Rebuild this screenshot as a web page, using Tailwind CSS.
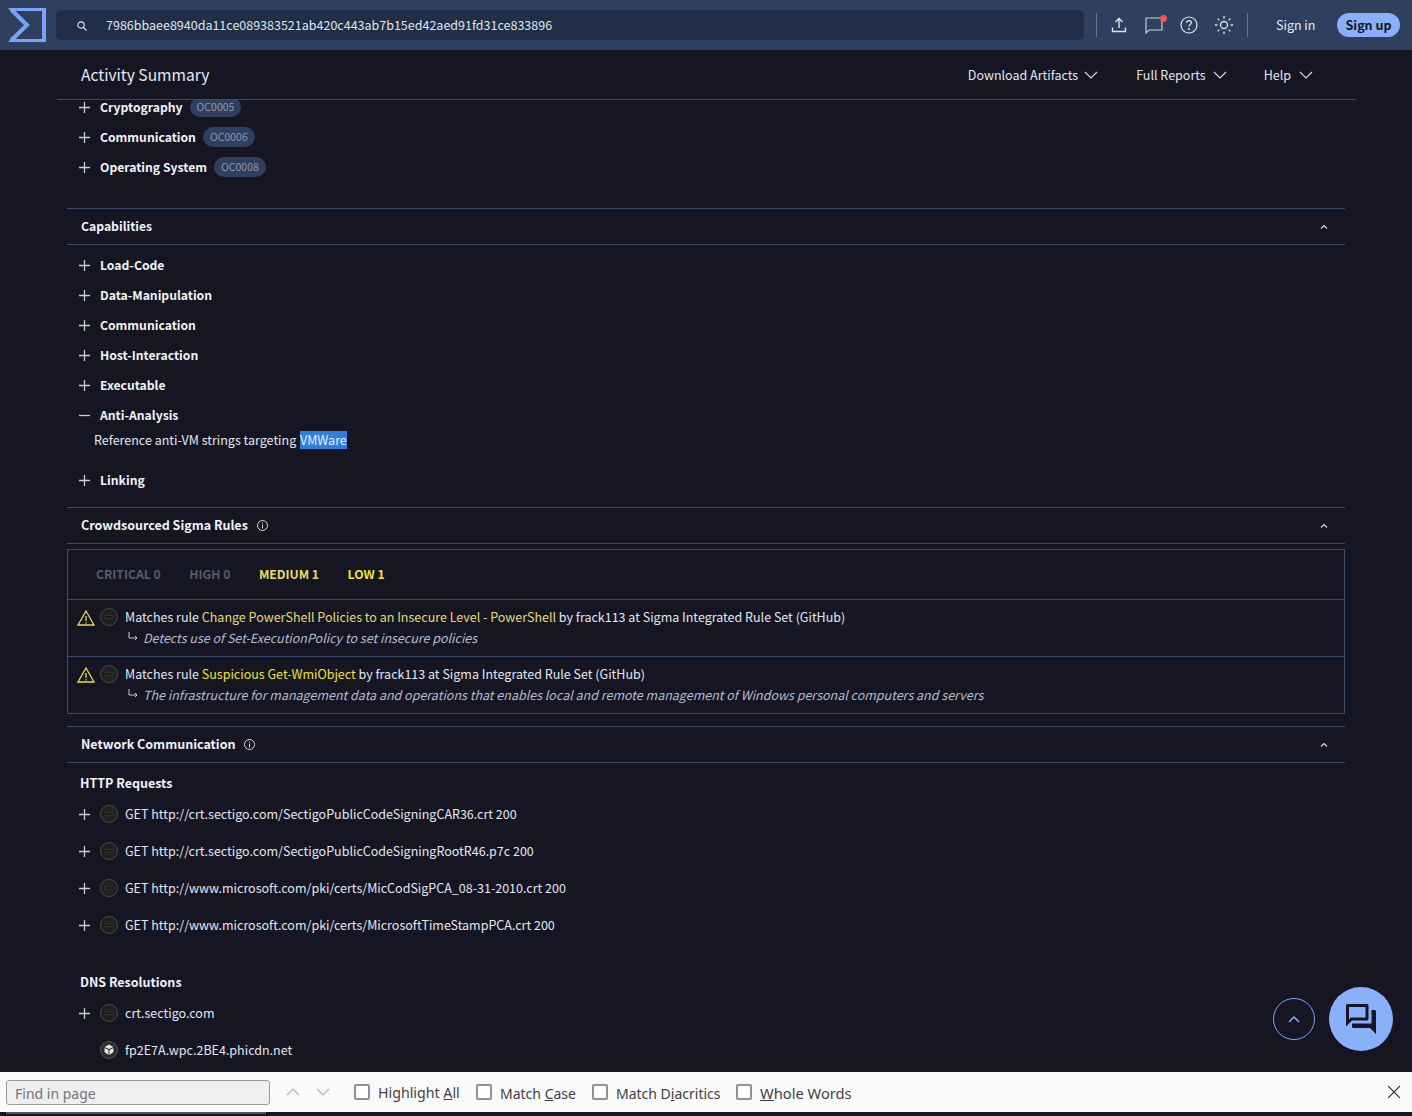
<!DOCTYPE html>
<html lang="en">
<head>
<meta charset="UTF-8">
<title>Activity Summary</title>
<script src="https://cdn.jsdelivr.net/npm/@tailwindcss/browser@4"></script>
</head>
<body class="bg-[#151622]">
<div class="relative w-[1412px] h-[1116px] overflow-hidden flex flex-col font-['Noto_Sans_CJK_JP','Noto_Sans',sans-serif] text-[12.5px] text-[#e3e6ee]">

  <!-- Top bar -->
  <header class="h-[50px] shrink-0 bg-[#2f3f5e] flex items-center">
    <svg class="ml-[8px] shrink-0" width="38" height="34" viewBox="0 0 38 34" fill="none">
      <path d="M36 1.500H3.500L19 17L3.500 32.500H36Z" stroke="#7ba2f7" stroke-width="3"/>
      <path d="M36 0V34" stroke="#7ba2f7" stroke-width="4"/>
      <path d="M3 1.500L19 17L3 32.500" stroke="#7ba2f7" stroke-width="4"/>
    </svg>
    <div class="ml-[10px] w-[1028px] h-[30px] bg-[#222e47] rounded-[5px] flex items-center">
      <svg class="ml-[21px] mt-[2px]" width="10" height="10" viewBox="0 0 12 12" fill="none" stroke="#e3e6ee" stroke-width="1.300"><circle cx="4.800" cy="4.800" r="3.800"/><path d="M7.500 7.500L11.500 11.500"/></svg>
      <span class="ml-[19px] text-[#dfe3ec] leading-none">7986bbaee8940da11ce089383521ab420c443ab7b15ed42aed91fd31ce833896</span>
    </div>
    <div class="ml-[12px] w-px h-[24px] bg-[#64748f]"></div>
    <svg class="ml-[13px]" width="18" height="18" viewBox="0 0 18 18" fill="none" stroke="#dfe3ec" stroke-width="1.400"><path d="M9 12V2.500M5.500 6L9 2.500L12.500 6"/><path d="M2.500 11.500V15.500H15.500V11.500"/></svg>
    <div class="relative ml-[17px] w-[18px] h-[18px]">
      <svg width="18" height="18" viewBox="0 0 18 18" fill="none" stroke="#c7cedb" stroke-width="1.200"><path d="M1 2H17V14H4L1 17Z"/></svg>
      <span class="absolute -top-[1px] right-[-4px] w-[7px] h-[7px] rounded-full bg-[#f4524d]"></span>
    </div>
    <svg class="ml-[17px]" width="18" height="18" viewBox="0 0 18 18" fill="none" stroke="#dfe3ec" stroke-width="1.200"><circle cx="9" cy="9" r="8"/><path d="M6.600 7C6.600 5.500 7.700 4.600 9 4.600C10.400 4.600 11.400 5.500 11.400 6.800C11.400 8.500 9 8.700 9 10.700"/><circle cx="9" cy="13" r="0.500"/></svg>
    <svg class="ml-[16px]" width="20" height="20" viewBox="0 0 20 20" fill="none" stroke="#dfe3ec" stroke-width="1.300"><circle cx="10" cy="10" r="3.500"/><path d="M10 1V3.500M10 16.500V19M1 10H3.500M16.500 10H19M3.600 3.600L5.400 5.400M14.600 14.600L16.400 16.400M3.600 16.400L5.400 14.600M14.600 5.400L16.400 3.600"/></svg>
    <div class="ml-[13px] w-px h-[24px] bg-[#64748f]"></div>
    <span class="ml-[28px] w-[40px] whitespace-nowrap text-[#e6e9f0]">Sign in</span>
    <span class="ml-[21px] w-[63px] h-[24px] rounded-full bg-[#8ab0fb] text-[#151622] font-bold flex items-center justify-center">Sign up</span>
  </header>

  <!-- Activity Summary bar -->
  <div class="h-[50px] shrink-0 ml-[57px] w-[1299px] border-b border-[#3d4a68] flex items-center">
    <span class="ml-[24px] text-[15.6px] text-[#e6e9f0]">Activity Summary</span>
    <div class="ml-auto flex items-center text-[#e3e6ee]">
      <span class="pt-[2px]">Download Artifacts</span>
      <svg class="ml-[6px]" width="14" height="8" viewBox="0 0 14 8" fill="none" stroke="#d5dae5" stroke-width="1.200"><path d="M1 1L7 7L13 1"/></svg>
      <span class="ml-[38px] pt-[2px]">Full Reports</span>
      <svg class="ml-[7px]" width="14" height="8" viewBox="0 0 14 8" fill="none" stroke="#d5dae5" stroke-width="1.200"><path d="M1 1L7 7L13 1"/></svg>
      <span class="ml-[37px] pt-[2px]">Help</span>
      <svg class="ml-[8px] mr-[43px]" width="14" height="8" viewBox="0 0 14 8" fill="none" stroke="#d5dae5" stroke-width="1.200"><path d="M1 1L7 7L13 1"/></svg>
    </div>
  </div>

  <!-- Scrolled content -->
  <main class="flex-1 overflow-hidden ml-[67px] w-[1278px]">
    <div class="-mt-[8px]">
      <div class="h-[30px] flex items-center">
        <svg class="ml-[12px] shrink-0" width="11" height="11" viewBox="0 0 12 12" stroke="#c9ced9" stroke-width="1.400"><path d="M0 6H12M6 0V12"/></svg>
        <span class="ml-[10px] font-bold text-[12.2px] text-[#f1f3f7]">Cryptography</span>
        <span class="ml-[7px] px-[7px] h-[20px] rounded-full bg-[#2f3f5e] text-[#8d98ae] text-[10.5px] flex items-center">OC0005</span>
      </div>
      <div class="h-[30px] flex items-center">
        <svg class="ml-[12px] shrink-0" width="11" height="11" viewBox="0 0 12 12" stroke="#c9ced9" stroke-width="1.400"><path d="M0 6H12M6 0V12"/></svg>
        <span class="ml-[10px] font-bold text-[12.2px] text-[#f1f3f7]">Communication</span>
        <span class="ml-[7px] px-[7px] h-[20px] rounded-full bg-[#2f3f5e] text-[#8d98ae] text-[10.5px] flex items-center">OC0006</span>
      </div>
      <div class="h-[30px] flex items-center">
        <svg class="ml-[12px] shrink-0" width="11" height="11" viewBox="0 0 12 12" stroke="#c9ced9" stroke-width="1.400"><path d="M0 6H12M6 0V12"/></svg>
        <span class="ml-[10px] font-bold text-[12.2px] text-[#f1f3f7]">Operating System</span>
        <span class="ml-[7px] px-[7px] h-[20px] rounded-full bg-[#2f3f5e] text-[#8d98ae] text-[10.5px] flex items-center">OC0008</span>
      </div>

      <!-- Capabilities -->
      <div class="mt-[26px] h-[37px] border-y border-[#3d4a68] flex items-center justify-between">
        <span class="ml-[14px] font-bold text-[12.2px] text-[#f1f3f7]">Capabilities</span>
        <svg class="mr-[17px] mb-[1px]" width="8" height="5" viewBox="0 0 8 5" fill="none" stroke="#d5dae5" stroke-width="1.200"><path d="M1 4.500L4 1.500L7 4.500"/></svg>
      </div>
      <div class="mt-[5px]">
        <div class="h-[30px] flex items-center">
          <svg class="ml-[12px] shrink-0" width="11" height="11" viewBox="0 0 12 12" stroke="#c9ced9" stroke-width="1.400"><path d="M0 6H12M6 0V12"/></svg>
          <span class="ml-[10px] font-bold text-[12.2px] text-[#f1f3f7]">Load-Code</span>
        </div>
        <div class="h-[30px] flex items-center">
          <svg class="ml-[12px] shrink-0" width="11" height="11" viewBox="0 0 12 12" stroke="#c9ced9" stroke-width="1.400"><path d="M0 6H12M6 0V12"/></svg>
          <span class="ml-[10px] font-bold text-[12.2px] text-[#f1f3f7]">Data-Manipulation</span>
        </div>
        <div class="h-[30px] flex items-center">
          <svg class="ml-[12px] shrink-0" width="11" height="11" viewBox="0 0 12 12" stroke="#c9ced9" stroke-width="1.400"><path d="M0 6H12M6 0V12"/></svg>
          <span class="ml-[10px] font-bold text-[12.2px] text-[#f1f3f7]">Communication</span>
        </div>
        <div class="h-[30px] flex items-center">
          <svg class="ml-[12px] shrink-0" width="11" height="11" viewBox="0 0 12 12" stroke="#c9ced9" stroke-width="1.400"><path d="M0 6H12M6 0V12"/></svg>
          <span class="ml-[10px] font-bold text-[12.2px] text-[#f1f3f7]">Host-Interaction</span>
        </div>
        <div class="h-[30px] flex items-center">
          <svg class="ml-[12px] shrink-0" width="11" height="11" viewBox="0 0 12 12" stroke="#c9ced9" stroke-width="1.400"><path d="M0 6H12M6 0V12"/></svg>
          <span class="ml-[10px] font-bold text-[12.2px] text-[#f1f3f7]">Executable</span>
        </div>
        <div class="h-[30px] flex items-center">
          <svg class="ml-[12px] shrink-0" width="11" height="11" viewBox="0 0 12 12" stroke="#c9ced9" stroke-width="1.400"><path d="M0 6H12"/></svg>
          <span class="ml-[10px] font-bold text-[12.2px] text-[#f1f3f7]">Anti-Analysis</span>
        </div>
        <div class="h-[20px] ml-[27px] flex items-center">Reference anti-VM strings targeting&nbsp;<span class="ml-[1px] bg-[#2f7ddf] text-[#e9f1ff] h-[18px] flex items-center">VMWare</span></div>
        <div class="mt-[15px] h-[30px] flex items-center">
          <svg class="ml-[12px] shrink-0" width="11" height="11" viewBox="0 0 12 12" stroke="#c9ced9" stroke-width="1.400"><path d="M0 6H12M6 0V12"/></svg>
          <span class="ml-[10px] font-bold text-[12.2px] text-[#f1f3f7]">Linking</span>
        </div>
      </div>

      <!-- Crowdsourced Sigma Rules -->
      <div class="mt-[12px] h-[37px] border-y border-[#3d4a68] flex items-center justify-between">
        <span class="ml-[14px] flex items-center font-bold text-[#f1f3f7]">Crowdsourced Sigma Rules
          <svg class="ml-[9px]" width="11" height="11" viewBox="0 0 11 11" fill="none" stroke="#d5dae5"><circle cx="5.500" cy="5.500" r="5"/><path d="M5.500 4.500V8.500M5.500 2.500V3.500"/></svg>
        </span>
        <svg class="mr-[17px] mb-[1px]" width="8" height="5" viewBox="0 0 8 5" fill="none" stroke="#d5dae5" stroke-width="1.200"><path d="M1 4.500L4 1.500L7 4.500"/></svg>
      </div>
      <div class="mt-[5px] border border-[#3d4a68]">
        <div class="h-[50px] border-b border-[#3d4a68] pl-[28px] flex items-center gap-[28.5px] font-bold text-[12.2px]">
          <span class="text-[#565c6e]">CRITICAL 0</span>
          <span class="text-[#565c6e]">HIGH 0</span>
          <span class="text-[#eadc62]">MEDIUM 1</span>
          <span class="text-[#f6e22e]">LOW 1</span>
        </div>
        <div class="h-[57px] border-b border-[#3d4a68] flex">
          <svg class="ml-[9px] mt-[10px]" width="18" height="16" viewBox="0 0 18 16" fill="none" stroke="#e2d56c" stroke-width="1.300"><path d="M9 1L17 15H1Z"/><path d="M9 6V11M9 12.200V13.500"/></svg>
          <svg class="ml-[5px] mt-[8px]" width="18" height="18" viewBox="0 0 18 18"><circle cx="9" cy="9" r="8.500" fill="#20211e" stroke="#4a4a42"/><rect x="4.500" y="7.500" width="9" height="3" rx="1" fill="#1a1b1a" stroke="#3e3e37" stroke-width="0.700"/></svg>
          <div class="ml-[7px]">
            <div class="mt-[7px] h-[20px] leading-[20px] whitespace-nowrap">Matches rule <span class="text-[#e5d973]">Change PowerShell Policies to an Insecure Level - PowerShell</span> by frack113 at Sigma Integrated Rule Set (GitHub)</div>
            <div class="mt-[1px] h-[20px] flex items-center">
              <svg class="ml-[3px] mb-[3px]" width="10" height="10" viewBox="0 0 10 10" fill="none" stroke="#c9ced9"><path d="M1 0V6H9M7 4L9 6L7 8"/></svg>
              <span class="ml-[5px] italic text-[#b6bdcd]">Detects use of Set-ExecutionPolicy to set insecure policies</span>
            </div>
          </div>
        </div>
        <div class="h-[56px] flex">
          <svg class="ml-[9px] mt-[10px]" width="18" height="16" viewBox="0 0 18 16" fill="none" stroke="#eddc3c" stroke-width="1.300"><path d="M9 1L17 15H1Z"/><path d="M9 6V11M9 12.200V13.500"/></svg>
          <svg class="ml-[5px] mt-[8px]" width="18" height="18" viewBox="0 0 18 18"><circle cx="9" cy="9" r="8.500" fill="#20211e" stroke="#4a4a42"/><rect x="4.500" y="7.500" width="9" height="3" rx="1" fill="#1a1b1a" stroke="#3e3e37" stroke-width="0.700"/></svg>
          <div class="ml-[7px]">
            <div class="mt-[7px] h-[20px] leading-[20px] whitespace-nowrap">Matches rule <span class="text-[#f4e12c]">Suspicious Get-WmiObject</span> by frack113 at Sigma Integrated Rule Set (GitHub)</div>
            <div class="mt-[1px] h-[20px] flex items-center">
              <svg class="ml-[3px] mb-[3px]" width="10" height="10" viewBox="0 0 10 10" fill="none" stroke="#c9ced9"><path d="M1 0V6H9M7 4L9 6L7 8"/></svg>
              <span class="ml-[5px] italic text-[#b6bdcd]">The infrastructure for management data and operations that enables local and remote management of Windows personal computers and servers</span>
            </div>
          </div>
        </div>
      </div>

      <!-- Network Communication -->
      <div class="mt-[12px] h-[37px] border-y border-[#3d4a68] flex items-center justify-between">
        <span class="ml-[14px] flex items-center font-bold text-[#f1f3f7]">Network Communication
          <svg class="ml-[9px]" width="11" height="11" viewBox="0 0 11 11" fill="none" stroke="#d5dae5"><circle cx="5.500" cy="5.500" r="5"/><path d="M5.500 4.500V8.500M5.500 2.500V3.500"/></svg>
        </span>
        <svg class="mr-[17px] mb-[1px]" width="8" height="5" viewBox="0 0 8 5" fill="none" stroke="#d5dae5" stroke-width="1.200"><path d="M1 4.500L4 1.500L7 4.500"/></svg>
      </div>
      <div class="mt-[10px] ml-[13px] h-[20px] flex items-center font-bold text-[#f1f3f7]">HTTP Requests</div>
      <div class="mt-[3px]">
        <div class="h-[37px] flex items-center">
          <svg class="ml-[12px] mb-[1px] shrink-0" width="11" height="11" viewBox="0 0 12 12" stroke="#c9ced9" stroke-width="1.400"><path d="M0 6H12M6 0V12"/></svg>
          <svg class="ml-[10px] mb-[1px]" width="18" height="18" viewBox="0 0 18 18"><circle cx="9" cy="9" r="8.500" fill="#20211e" stroke="#4a4a42"/><rect x="4.500" y="7.500" width="9" height="3" rx="1" fill="#1a1b1a" stroke="#3e3e37" stroke-width="0.700"/></svg>
          <span class="ml-[7px]">GET http://crt.sectigo.com/SectigoPublicCodeSigningCAR36.crt 200</span>
        </div>
        <div class="h-[37px] flex items-center">
          <svg class="ml-[12px] mb-[1px] shrink-0" width="11" height="11" viewBox="0 0 12 12" stroke="#c9ced9" stroke-width="1.400"><path d="M0 6H12M6 0V12"/></svg>
          <svg class="ml-[10px] mb-[1px]" width="18" height="18" viewBox="0 0 18 18"><circle cx="9" cy="9" r="8.500" fill="#20211e" stroke="#4a4a42"/><rect x="4.500" y="7.500" width="9" height="3" rx="1" fill="#1a1b1a" stroke="#3e3e37" stroke-width="0.700"/></svg>
          <span class="ml-[7px]">GET http://crt.sectigo.com/SectigoPublicCodeSigningRootR46.p7c 200</span>
        </div>
        <div class="h-[37px] flex items-center">
          <svg class="ml-[12px] mb-[1px] shrink-0" width="11" height="11" viewBox="0 0 12 12" stroke="#c9ced9" stroke-width="1.400"><path d="M0 6H12M6 0V12"/></svg>
          <svg class="ml-[10px] mb-[1px]" width="18" height="18" viewBox="0 0 18 18"><circle cx="9" cy="9" r="8.500" fill="#20211e" stroke="#4a4a42"/><rect x="4.500" y="7.500" width="9" height="3" rx="1" fill="#1a1b1a" stroke="#3e3e37" stroke-width="0.700"/></svg>
          <span class="ml-[7px]">GET http://www.microsoft.com/pki/certs/MicCodSigPCA_08-31-2010.crt 200</span>
        </div>
        <div class="h-[37px] flex items-center">
          <svg class="ml-[12px] mb-[1px] shrink-0" width="11" height="11" viewBox="0 0 12 12" stroke="#c9ced9" stroke-width="1.400"><path d="M0 6H12M6 0V12"/></svg>
          <svg class="ml-[10px] mb-[1px]" width="18" height="18" viewBox="0 0 18 18"><circle cx="9" cy="9" r="8.500" fill="#20211e" stroke="#4a4a42"/><rect x="4.500" y="7.500" width="9" height="3" rx="1" fill="#1a1b1a" stroke="#3e3e37" stroke-width="0.700"/></svg>
          <span class="ml-[7px]">GET http://www.microsoft.com/pki/certs/MicrosoftTimeStampPCA.crt 200</span>
        </div>
      </div>
      <div class="mt-[28px] ml-[13px] h-[20px] flex items-center font-bold text-[#f1f3f7]">DNS Resolutions</div>
      <div class="mt-[3px]">
        <div class="h-[37px] flex items-center">
          <svg class="ml-[12px] mb-[1px] shrink-0" width="11" height="11" viewBox="0 0 12 12" stroke="#c9ced9" stroke-width="1.400"><path d="M0 6H12M6 0V12"/></svg>
          <svg class="ml-[10px] mb-[1px]" width="18" height="18" viewBox="0 0 18 18"><circle cx="9" cy="9" r="8.500" fill="#20211e" stroke="#4a4a42"/><rect x="4.500" y="7.500" width="9" height="3" rx="1" fill="#1a1b1a" stroke="#3e3e37" stroke-width="0.700"/></svg>
          <span class="ml-[7px]">crt.sectigo.com</span>
        </div>
        <div class="h-[37px] flex items-center">
          <svg class="ml-[33px] mb-[1px]" width="18" height="18" viewBox="0 0 18 18"><circle cx="9" cy="9" r="8.500" fill="#2c2c2c" stroke="#55554f"/><path d="M9 3.500L13.500 6L9 8L4.500 6Z" fill="#e6e6e6"/><path d="M4.500 7L8.500 9V14L4.500 11Z" fill="#e6e6e6"/><path d="M13.500 7L9.500 9V14L13.500 11Z" fill="#e6e6e6"/></svg>
          <span class="ml-[7px]">fp2E7A.wpc.2BE4.phicdn.net</span>
        </div>
      </div>
    </div>
  </main>

  <!-- Browser find bar -->
  <div class="h-[40px] shrink-0 bg-[#fafafa] flex items-center font-['Noto_Sans',sans-serif] text-[14px] text-[#3f3f46]">
    <div class="ml-[6px] w-[264px] h-[25px] bg-[#efefef] border border-[#9a9a9a] rounded-[3px] pl-[8px] pt-[2px] flex items-center text-[#74747c]">Find in page</div>
    <svg class="ml-[16px]" width="14" height="8" viewBox="0 0 14 8" fill="none" stroke="#b4b4b8" stroke-width="1.200"><path d="M1 7L7 1L13 7"/></svg>
    <svg class="ml-[16px]" width="14" height="8" viewBox="0 0 14 8" fill="none" stroke="#b4b4b8" stroke-width="1.200"><path d="M1 1L7 7L13 1"/></svg>
    <span class="ml-[24px] w-[16px] h-[16px] border-2 border-[#8f8f9d] rounded-[2px] bg-white"></span>
    <span class="ml-[8px] pt-[2px] w-[98px] text-[14.2px]">Highlight <span class="underline">A</span>ll</span>
    <span class="w-[16px] h-[16px] border-2 border-[#8f8f9d] rounded-[2px] bg-white"></span>
    <span class="ml-[8px] pt-[2px] w-[92px]">Match <span class="underline">C</span>ase</span>
    <span class="w-[16px] h-[16px] border-2 border-[#8f8f9d] rounded-[2px] bg-white"></span>
    <span class="ml-[8px] pt-[2px] w-[120px]">Match D<span class="underline">i</span>acritics</span>
    <span class="w-[16px] h-[16px] border-2 border-[#8f8f9d] rounded-[2px] bg-white"></span>
    <span class="ml-[8px] pt-[2px] text-[14.7px]"><span class="underline">W</span>hole Words</span>
    <svg class="ml-auto mr-[12px]" width="12" height="12" viewBox="0 0 12 12" stroke="#2b2b33" stroke-width="1.200"><path d="M0 0L12 12M12 0L0 12"/></svg>
  </div>
  <div class="h-[4px] shrink-0 bg-[#151622]">
    <div class="ml-[6px] w-[260px] h-[2px] bg-[#55555c]"></div>
  </div>

  <!-- Floating buttons -->
  <div class="absolute left-[1273px] top-[998px] w-[42px] h-[42px] rounded-full border border-[#7ba2f7] flex items-center justify-center">
    <svg width="12" height="7" viewBox="0 0 12 7" fill="none" stroke="#8ab0fb" stroke-width="1.500"><path d="M1 6L6 1L11 6"/></svg>
  </div>
  <div class="absolute left-[1329px] top-[987px] w-[64px] h-[64px] rounded-full bg-[#8ab0fb] flex items-center justify-center">
    <svg width="36" height="36" viewBox="0 0 24 24" fill="#151622"><path d="M15 4v7H5.170L4 12.170V4h11m1-2H3c-.55 0-1 .45-1 1v14l4-4h10c.55 0 1-.45 1-1V3c0-.55-.45-1-1-1zm5 4h-2v9H6v2c0 .55.45 1 1 1h11l4 4V7c0-.55-.45-1-1-1z"/></svg>
  </div>
</div>
</body>
</html>
